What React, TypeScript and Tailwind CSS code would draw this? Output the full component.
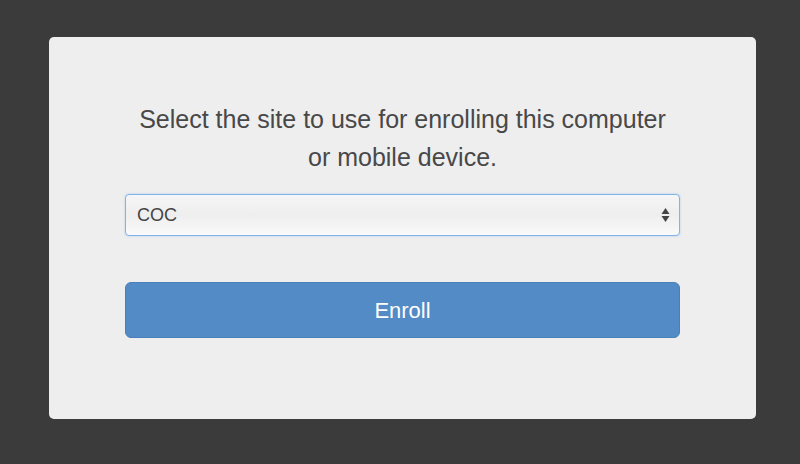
export default function App() {
  return (
    <div className="w-[800px] h-[464px] bg-[#3b3b3b] pt-[37px] pl-[49px] font-['Liberation_Sans',Arial,sans-serif]">
      <div className="w-[707px] h-[382px] bg-[#eeeeee] rounded-[5px] px-[76px] pt-[63px]">
        <p className="text-center text-[25px] leading-[38px] text-[#484848]">
          Select the site to use for enrolling this computer
          <br />
          or mobile device.
        </p>
        <div className="mt-[18px] relative h-[42px] rounded-[4px] border border-[#80b3ea] bg-gradient-to-b from-[#f6f6f6] via-[#eeeeee] to-[#fafafa] shadow-[0_0_2px_rgba(100,160,230,0.5)] flex items-center pl-[11px]">
          <span className="text-[18px] text-[#444444]">COC</span>
          <svg className="absolute right-[9px] top-1/2 -translate-y-1/2" width="9" height="15" viewBox="0 0 9 15">
            <path d="M4.5 0.5 L8.5 6.5 H0.5 Z" fill="#444" />
            <path d="M4.5 14.5 L8.5 8.5 H0.5 Z" fill="#444" />
          </svg>
        </div>
        <button className="mt-[46px] w-full h-[56px] rounded-[6px] bg-[#528bc5] border border-[#4a80b8] text-white text-[22px] flex items-center justify-center">
          Enroll
        </button>
      </div>
    </div>
  );
}
